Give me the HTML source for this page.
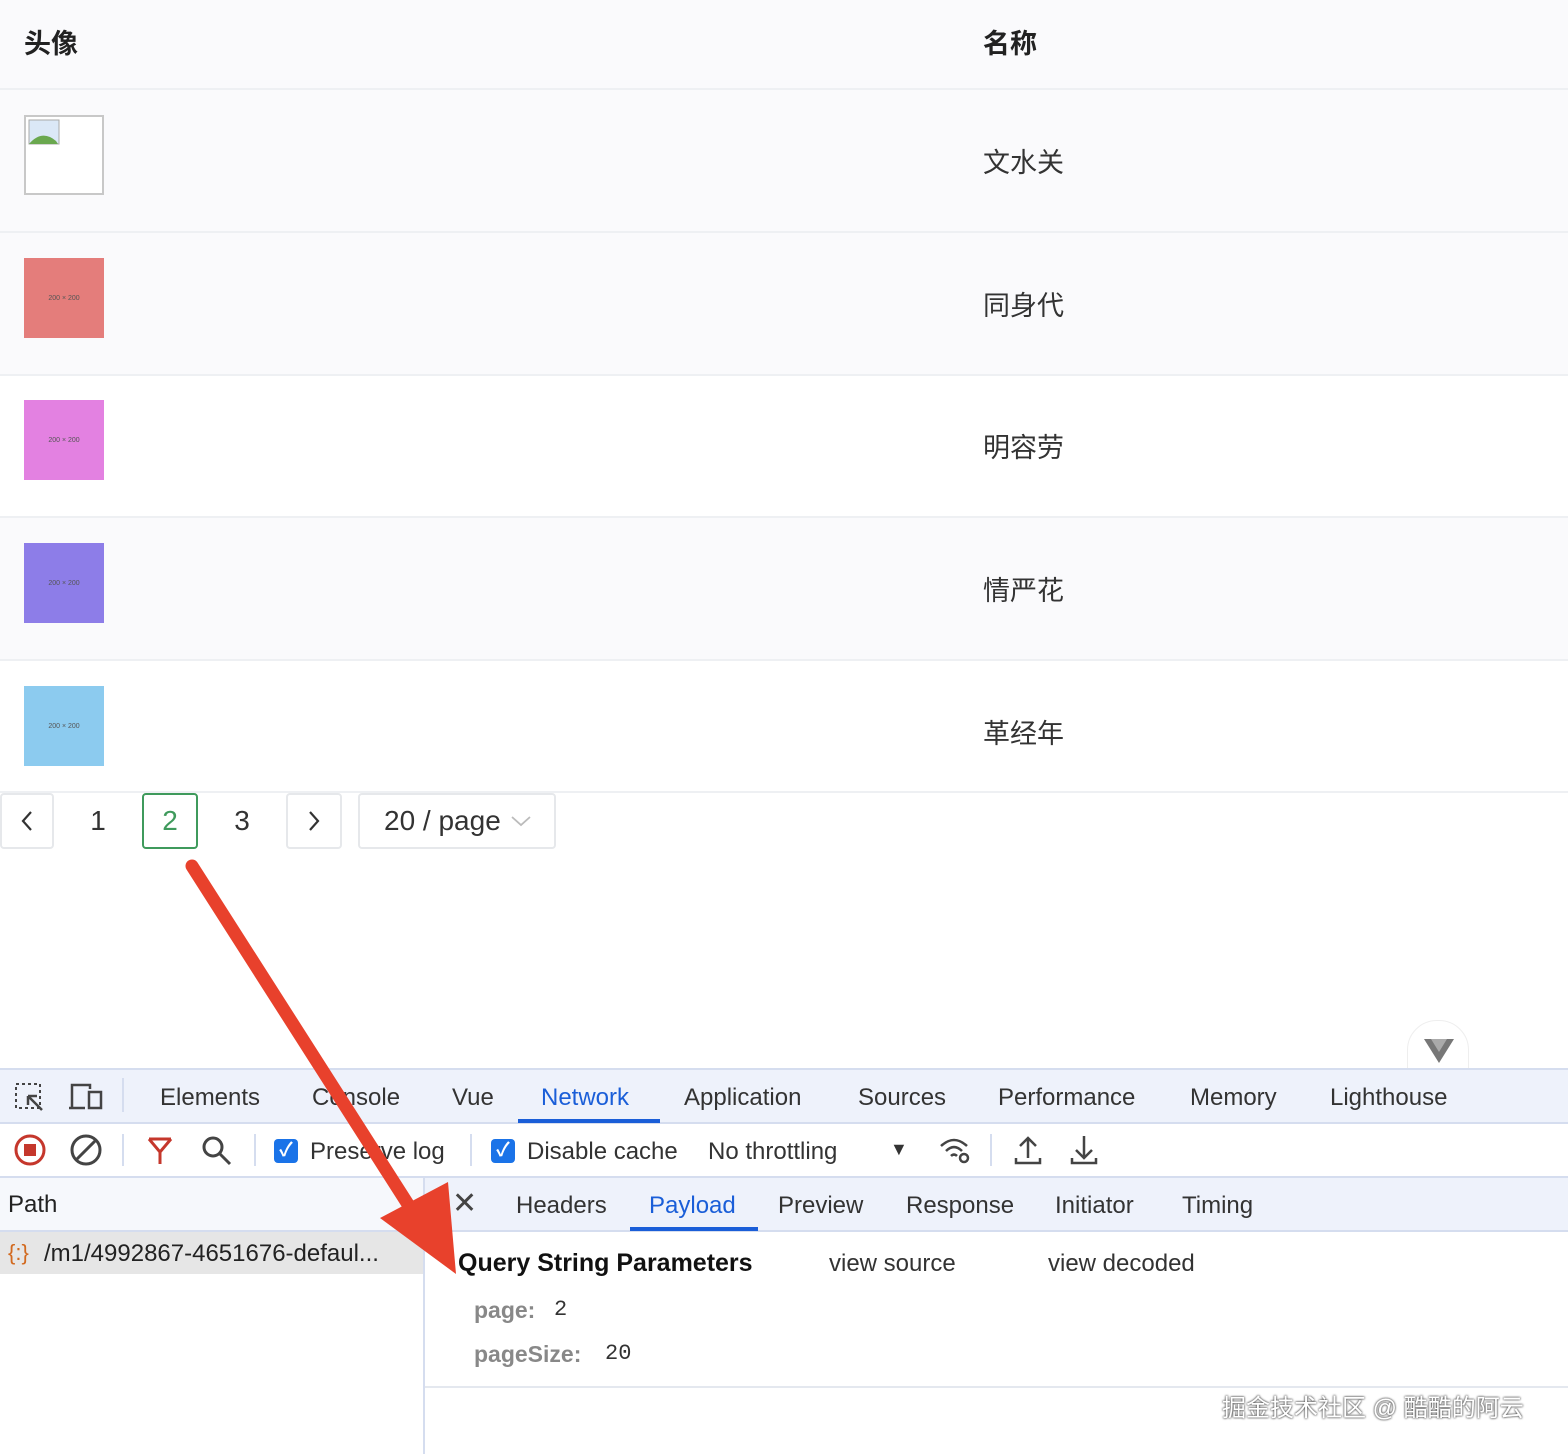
<!DOCTYPE html>
<html><head><meta charset="utf-8"><style>
*{box-sizing:border-box;margin:0;padding:0}
body{width:1568px;height:1454px;position:relative;overflow:hidden;background:#fff;font-family:"Liberation Sans","Noto Sans CJK SC",sans-serif;color:#222}
.a{position:absolute}
.row{position:absolute;left:0;width:1568px;border-bottom:2px solid #eef0f3}
.g{background:#fafafc}
.nm{position:absolute;left:983px;font-size:27px;color:#333}
.img{position:absolute;left:24px;width:80px;height:80px;font-size:7px;color:#555;display:flex;align-items:center;justify-content:center}
.pg{position:absolute;top:793px;height:56px;border:2px solid #e6e8eb;border-radius:4px;font-size:28px;display:flex;align-items:center;justify-content:center;color:#333}
.t{position:absolute;font-size:24px;color:#333}
.blue{color:#1a5ed8}
.cb{position:absolute;width:24px;height:24px;background:#1a73e8;border-radius:4px;color:#fff;font-size:19px;text-align:center;line-height:24px;font-weight:bold}
</style></head><body>
<div class="row g" style="top:0;height:90px"><div class="a" style="left:24px;top:22px;font-size:27px;font-weight:bold">头像</div><div class="a" style="left:983px;top:22px;font-size:27px;font-weight:bold">名称</div></div>
<div class="row g" style="top:90px;height:143px"><div class="a" style="left:24px;top:25px;width:80px;height:80px;border:2px solid #c8c8c8;background:#fff"><svg width="34" height="30" style="position:absolute;left:2px;top:2px"><rect x="1" y="1" width="30" height="24" fill="#dbe8f7" stroke="#aaa"/><path d="M1 25 Q14 10 28 22 L30 25Z" fill="#6aa84f"/></svg></div><div class="nm" style="top:51px">文水关</div></div>
<div class="row g" style="top:233px;height:143px"><div class="img" style="top:25px;background:#e47d7b">200 × 200</div><div class="nm" style="top:51px">同身代</div></div>
<div class="row" style="top:376px;height:142px"><div class="img" style="top:24px;background:#e381e1">200 × 200</div><div class="nm" style="top:50px">明容劳</div></div>
<div class="row g" style="top:518px;height:143px"><div class="img" style="top:25px;background:#8d7de8">200 × 200</div><div class="nm" style="top:51px">情严花</div></div>
<div class="row" style="top:661px;height:132px"><div class="img" style="top:25px;background:#8ccbef">200 × 200</div><div class="nm" style="top:51px">革经年</div></div>
<div class="pg" style="left:0;width:54px"><svg width="14" height="22"><path d="M11 2L3 11l8 9" stroke="#333" stroke-width="2.2" fill="none"/></svg></div>
<div class="pg" style="left:70px;width:56px;border:none">1</div>
<div class="pg" style="left:142px;width:56px;border-color:#3f9a5c;color:#3f9a5c">2</div>
<div class="pg" style="left:214px;width:56px;border:none">3</div>
<div class="pg" style="left:286px;width:56px"><svg width="14" height="22"><path d="M3 2l8 9-8 9" stroke="#333" stroke-width="2.2" fill="none"/></svg></div>
<div class="pg" style="left:358px;width:198px;justify-content:flex-start;padding-left:24px">20 / page <svg width="20" height="12" style="margin-left:10px"><path d="M1 2l9 8 9-8" stroke="#bbb" stroke-width="1.8" fill="none"/></svg></div>
<div class="a" style="left:1407px;top:1020px;width:62px;height:60px;border-radius:30px 30px 0 0;background:#fff;border:1px solid #eee"><svg width="30" height="24" style="position:absolute;left:16px;top:18px"><path d="M0 0h30L15 24Z" fill="#777"/><path d="M7 0h16L15 13Z" fill="#aaa"/></svg></div>
<div class="a" style="left:0;top:1068px;width:1568px;height:56px;background:#eef2fb;border-top:2px solid #d5ddef;border-bottom:2px solid #d5ddef"></div>
<svg class="a" style="left:14px;top:1082px" width="32" height="30"><rect x="2" y="2" width="24" height="24" fill="none" stroke="#444" stroke-width="2" stroke-dasharray="3 3"/><path d="M14 14 L28 28 M14 14 v9 M14 14 h9" stroke="#444" stroke-width="2.5" fill="none"/></svg>
<svg class="a" style="left:68px;top:1082px" width="36" height="30"><path d="M4 26V3h18v4" stroke="#444" stroke-width="2.5" fill="none"/><path d="M1 26h16" stroke="#444" stroke-width="2.5"/><rect x="21" y="10" width="12" height="16" fill="none" stroke="#444" stroke-width="2.5"/></svg>
<div class="a" style="left:122px;top:1078px;width:2px;height:34px;background:#d5ddef"></div>
<div class="t" style="left:160px;top:1084px">Elements</div><div class="t" style="left:312px;top:1084px">Console</div><div class="t" style="left:452px;top:1084px">Vue</div>
<div class="t blue" style="left:541px;top:1084px">Network</div><div class="a" style="left:518px;top:1119px;width:142px;height:4px;background:#1a5ed8"></div>
<div class="t" style="left:684px;top:1084px">Application</div><div class="t" style="left:858px;top:1084px">Sources</div><div class="t" style="left:998px;top:1084px">Performance</div><div class="t" style="left:1190px;top:1084px">Memory</div><div class="t" style="left:1330px;top:1084px">Lighthouse</div>
<svg class="a" style="left:14px;top:1134px" width="34" height="34"><circle cx="16" cy="16" r="14" fill="none" stroke="#c5372c" stroke-width="3"/><rect x="10" y="10" width="12" height="12" fill="#c5372c"/></svg>
<svg class="a" style="left:70px;top:1134px" width="34" height="34"><circle cx="16" cy="16" r="14" fill="none" stroke="#444" stroke-width="3"/><path d="M6 26L26 6" stroke="#444" stroke-width="3"/></svg>
<div class="a" style="left:122px;top:1134px;width:2px;height:32px;background:#d5ddef"></div>
<svg class="a" style="left:146px;top:1136px" width="30" height="30"><path d="M3 3L14 16V28M25 3L14 16M3 3h22" stroke="#c5372c" stroke-width="3" fill="none"/></svg>
<svg class="a" style="left:200px;top:1134px" width="34" height="34"><circle cx="13" cy="13" r="9" fill="none" stroke="#444" stroke-width="3"/><path d="M20 20L30 30" stroke="#444" stroke-width="3"/></svg>
<div class="a" style="left:254px;top:1134px;width:2px;height:32px;background:#d5ddef"></div>
<div class="cb" style="left:274px;top:1139px">✓</div><div class="t" style="left:310px;top:1138px">Preserve log</div>
<div class="a" style="left:470px;top:1134px;width:2px;height:32px;background:#d5ddef"></div>
<div class="cb" style="left:491px;top:1139px">✓</div><div class="t" style="left:527px;top:1138px">Disable cache</div>
<div class="t" style="left:708px;top:1138px">No throttling</div><div class="t" style="left:890px;top:1139px;font-size:18px">▼</div>
<svg class="a" style="left:938px;top:1134px" width="34" height="32"><path d="M3 12 Q16 0 29 12 M8 17 Q16 9 24 17 M13 22 Q16 19 19 22" stroke="#444" stroke-width="2.5" fill="none"/><circle cx="26" cy="24" r="4" fill="none" stroke="#444" stroke-width="2.5"/></svg>
<div class="a" style="left:990px;top:1134px;width:2px;height:32px;background:#d5ddef"></div>
<svg class="a" style="left:1014px;top:1134px" width="28" height="32"><path d="M14 24V4M6 12l8-8 8 8M2 24v5h24v-5" stroke="#444" stroke-width="2.5" fill="none"/></svg>
<svg class="a" style="left:1070px;top:1134px" width="28" height="32"><path d="M14 2v22M6 16l8 8 8-8M2 24v5h24v-5" stroke="#444" stroke-width="2.5" fill="none"/></svg>
<div class="a" style="left:0;top:1176px;width:1568px;height:56px;background:#eef2fb;border-top:2px solid #d5ddef;border-bottom:2px solid #d5ddef"></div>
<div class="a" style="left:0;top:1178px;width:423px;height:52px;background:#f6f8fc"></div>
<div class="t" style="left:8px;top:1191px;color:#222">Path</div>
<div class="a" style="left:423px;top:1176px;width:2px;height:278px;background:#d5ddef"></div>
<div class="t" style="left:452px;top:1186px;font-size:30px;color:#444">✕</div>
<div class="t" style="left:516px;top:1192px">Headers</div><div class="t blue" style="left:649px;top:1192px">Payload</div><div class="a" style="left:630px;top:1227px;width:128px;height:4px;background:#1a5ed8"></div>
<div class="t" style="left:778px;top:1192px">Preview</div><div class="t" style="left:906px;top:1192px">Response</div><div class="t" style="left:1055px;top:1192px">Initiator</div><div class="t" style="left:1182px;top:1192px">Timing</div>
<div class="a" style="left:0;top:1232px;width:423px;height:42px;background:#e6e6e6"></div>
<div class="t" style="left:8px;top:1240px;font-size:22px;color:#d2691e">{:}</div><div class="t" style="left:44px;top:1240px;color:#222">/m1/4992867-4651676-defaul...</div>
<div class="t" style="left:458px;top:1249px;font-weight:bold;color:#111;font-size:25px">Query String Parameters</div>
<div class="t" style="left:829px;top:1250px">view source</div><div class="t" style="left:1048px;top:1250px">view decoded</div>
<div class="t" style="left:474px;top:1297px;font-weight:bold;color:#888;font-size:23px">page:</div><div class="t" style="left:554px;top:1297px;font-family:'Liberation Mono',monospace;font-size:22px">2</div>
<div class="t" style="left:474px;top:1341px;font-weight:bold;color:#888;font-size:23px">pageSize:</div><div class="t" style="left:605px;top:1341px;font-family:'Liberation Mono',monospace;font-size:22px">20</div>
<div class="a" style="left:425px;top:1386px;width:1143px;height:2px;background:#e4e8ef"></div>
<div class="a" style="left:1222px;top:1388px;font-size:24px;color:#fff;text-shadow:0 0 2px #555,0 0 2px #555">掘金技术社区 @ 酷酷的阿云</div>
<svg class="a" style="left:0;top:0" width="1568" height="1454"><path d="M192 866L418 1220" stroke="#e8412c" stroke-width="13" stroke-linecap="round"/><path d="M380 1218L456 1274 448 1182Z" fill="#e8412c"/></svg>
</body></html>
